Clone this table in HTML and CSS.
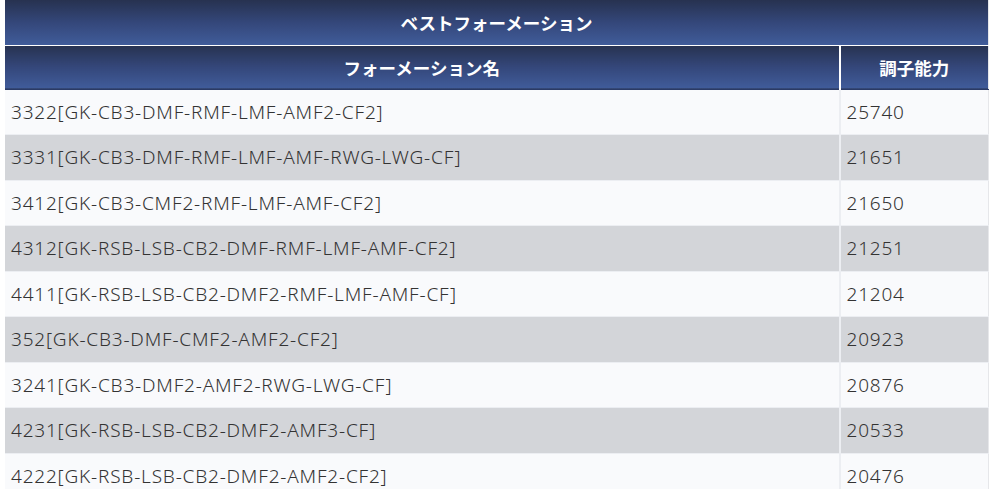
FILE: index.html
```html
<!DOCTYPE html>
<html lang="ja">
<head>
  <meta charset="UTF-8" />
  <meta name="viewport" content="width=device-width, initial-scale=1" />
  <title>ベストフォーメーション</title>
  <link rel="stylesheet" href="styles.css">
</head>
<body>
  <table class="formation">
    <thead>
      <tr>
        <th class="title" colspan="2">ベストフォーメーション</th>
      </tr>
      <tr>
        <th class="col-name">フォーメーション名</th>
        <th class="col-power">調子能力</th>
      </tr>
    </thead>
    <tbody>
      <tr><td>3322[GK-CB3-DMF-RMF-LMF-AMF2-CF2]</td><td>25740</td></tr>
      <tr><td>3331[GK-CB3-DMF-RMF-LMF-AMF-RWG-LWG-CF]</td><td>21651</td></tr>
      <tr><td>3412[GK-CB3-CMF2-RMF-LMF-AMF-CF2]</td><td>21650</td></tr>
      <tr><td>4312[GK-RSB-LSB-CB2-DMF-RMF-LMF-AMF-CF2]</td><td>21251</td></tr>
      <tr><td>4411[GK-RSB-LSB-CB2-DMF2-RMF-LMF-AMF-CF]</td><td>21204</td></tr>
      <tr><td>352[GK-CB3-DMF-CMF2-AMF2-CF2]</td><td>20923</td></tr>
      <tr><td>3241[GK-CB3-DMF2-AMF2-RWG-LWG-CF]</td><td>20876</td></tr>
      <tr><td>4231[GK-RSB-LSB-CB2-DMF2-AMF3-CF]</td><td>20533</td></tr>
      <tr><td>4222[GK-RSB-LSB-CB2-DMF2-AMF2-CF2]</td><td>20476</td></tr>
    </tbody>
  </table>
</body>
</html>
```

FILE: styles.css
```css
* {
  box-sizing: border-box;
}

body {
  margin: 0;
  padding: 0 5px;
  background: #fff;
  font-family: "Noto Sans", "Noto Sans CJK JP", sans-serif;
  color: #333;
}

.formation {
  width: 984px;
  border-collapse: collapse;
  border-right: 1px solid #e6e7ea;
}

.formation th {
  background: linear-gradient(to bottom, #273250 0%, #34477a 50%, #405c9a 100%);
  color: #fff;
  font-family: "Noto Sans CJK JP", sans-serif;
  font-weight: 700;
  font-size: 17.5px;
  text-align: center;
  padding: 0;
}

.formation th.title {
  height: 45px;
  border-bottom: 1px solid #fff;
}

.formation th.col-name,
.formation th.col-power {
  height: 44px;
  border-bottom: 1px solid #2a3a66;
}

.formation th.col-power {
  width: 149px;
  border-left: 2px solid #fff;
}

.formation td {
  height: 45.5px;
  padding: 0 0 0 6px;
  font-size: 19px;
  letter-spacing: 0.8px;
  font-weight: 300;
  border-bottom: 1px solid #eceef2;
  background: #f9fafc;
}

.formation td + td {
  border-left: 2px solid #eceef2;
}

.formation tbody tr:nth-child(even) td {
  background: #d3d5d9;
}
```
